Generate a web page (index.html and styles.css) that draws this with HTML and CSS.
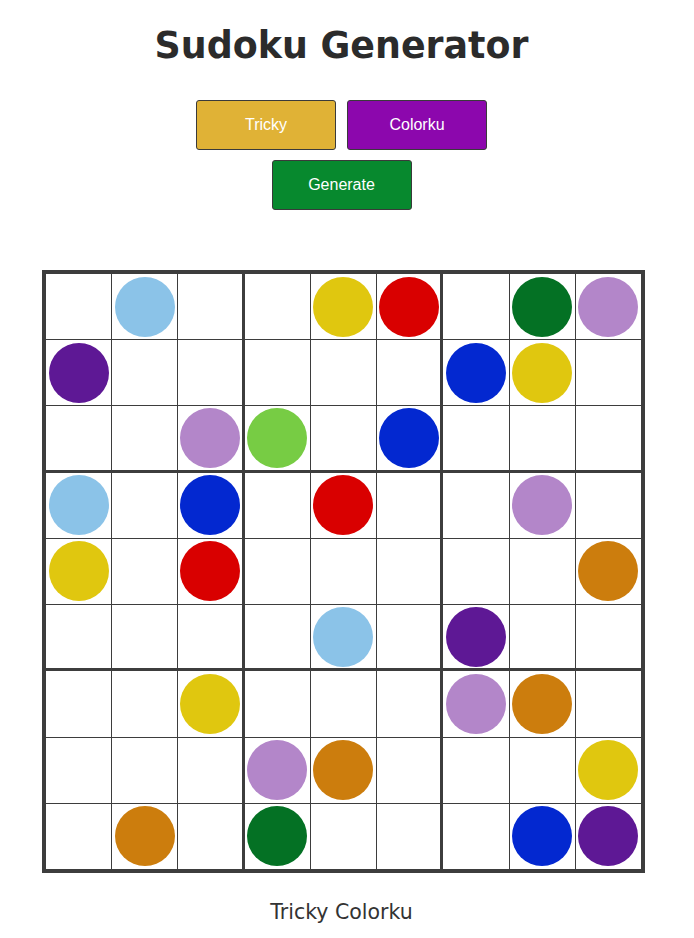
FILE: index.html
```html
<!DOCTYPE html>
<html>
<head>
<meta charset="utf-8">
<link rel="stylesheet" href="styles.css">
</head>
<body>
<div class="page">
  <h1 class="title">Sudoku Generator</h1>
  <div class="btn-row">
    <button class="btn btn-tricky">Tricky</button>
    <button class="btn btn-colorku">Colorku</button>
  </div>
  <div class="btn-row">
    <button class="btn btn-generate">Generate</button>
  </div>
  <div class="board">
    <div class="cell"></div><div class="cell"><span class="dot lb"></span></div><div class="cell c3"></div><div class="cell"></div><div class="cell"><span class="dot ye"></span></div><div class="cell c3"><span class="dot re"></span></div><div class="cell"></div><div class="cell"><span class="dot dg"></span></div><div class="cell"><span class="dot la"></span></div>
    <div class="cell"><span class="dot pu"></span></div><div class="cell"></div><div class="cell c3"></div><div class="cell"></div><div class="cell"></div><div class="cell c3"></div><div class="cell"><span class="dot bl"></span></div><div class="cell"><span class="dot ye"></span></div><div class="cell"></div>
    <div class="cell r3"></div><div class="cell r3"></div><div class="cell r3 c3"><span class="dot la"></span></div><div class="cell r3"><span class="dot lg"></span></div><div class="cell r3"></div><div class="cell r3 c3"><span class="dot bl"></span></div><div class="cell r3"></div><div class="cell r3"></div><div class="cell r3"></div>
    <div class="cell"><span class="dot lb"></span></div><div class="cell"></div><div class="cell c3"><span class="dot bl"></span></div><div class="cell"></div><div class="cell"><span class="dot re"></span></div><div class="cell c3"></div><div class="cell"></div><div class="cell"><span class="dot la"></span></div><div class="cell"></div>
    <div class="cell"><span class="dot ye"></span></div><div class="cell"></div><div class="cell c3"><span class="dot re"></span></div><div class="cell"></div><div class="cell"></div><div class="cell c3"></div><div class="cell"></div><div class="cell"></div><div class="cell"><span class="dot or"></span></div>
    <div class="cell r3"></div><div class="cell r3"></div><div class="cell r3 c3"></div><div class="cell r3"></div><div class="cell r3"><span class="dot lb"></span></div><div class="cell r3 c3"></div><div class="cell r3"><span class="dot pu"></span></div><div class="cell r3"></div><div class="cell r3"></div>
    <div class="cell"></div><div class="cell"></div><div class="cell c3"><span class="dot ye"></span></div><div class="cell"></div><div class="cell"></div><div class="cell c3"></div><div class="cell"><span class="dot la"></span></div><div class="cell"><span class="dot or"></span></div><div class="cell"></div>
    <div class="cell"></div><div class="cell"></div><div class="cell c3"></div><div class="cell"><span class="dot la"></span></div><div class="cell"><span class="dot or"></span></div><div class="cell c3"></div><div class="cell"></div><div class="cell"></div><div class="cell"><span class="dot ye"></span></div>
    <div class="cell"></div><div class="cell"><span class="dot or"></span></div><div class="cell c3"></div><div class="cell"><span class="dot dg"></span></div><div class="cell"></div><div class="cell c3"></div><div class="cell"></div><div class="cell"><span class="dot bl"></span></div><div class="cell"><span class="dot pu"></span></div>
  </div>
  <p class="caption">Tricky Colorku</p>
</div>
</body>
</html>
```

FILE: styles.css
```css
html, body {
  margin: 0;
  padding: 0;
  background: #ffffff;
}

.page {
  width: 683px;
  display: flex;
  flex-direction: column;
  align-items: center;
  padding-top: 24px;
}

.title {
  margin: 0 0 32px 0;
  font-family: "DejaVu Sans", Verdana, sans-serif;
  font-weight: bold;
  font-size: 36.4px;
  line-height: 44px;
  color: #2b2b2b;
}

.btn-row {
  display: flex;
  gap: 11px;
  margin-bottom: 10px;
}

.btn {
  width: 140px;
  height: 50px;
  border: 1px solid #3a3a3a;
  border-radius: 3px;
  color: #ffffff;
  font-family: "Liberation Sans", Arial, sans-serif;
  font-size: 16px;
  padding: 0;
}

.btn-tricky { background: #e0b236; }
.btn-colorku { background: #8c07ad; }
.btn-generate { background: #07892e; }

.board {
  align-self: flex-start;
  margin-left: 42px;
  margin-top: 50px;
  width: 603px;
  height: 603px;
  box-sizing: border-box;
  border: 4px solid #3d3d3d;
  background: #3d3d3d;
  display: grid;
  grid-template-columns: repeat(9, 1fr);
  grid-template-rows: repeat(9, 1fr);
  gap: 1px;
}

.cell {
  background: #ffffff;
  display: flex;
  align-items: center;
  justify-content: center;
}

.cell.c3 { margin-right: 2px; }
.cell.r3 { margin-bottom: 2px; }

.dot {
  width: 60px;
  height: 60px;
  border-radius: 50%;
  display: block;
}

.lb { background: #8bc3e8; }
.ye { background: #e0c70f; }
.re { background: #d90000; }
.dg { background: #047124; }
.la { background: #b386c9; }
.pu { background: #5e1895; }
.bl { background: #0328d0; }
.lg { background: #77cc44; }
.or { background: #cc7d0d; }

.caption {
  margin: 27px 0 0 0;
  font-family: "DejaVu Sans", Verdana, sans-serif;
  font-size: 20.5px;
  line-height: 24px;
  color: #333333;
}
```
